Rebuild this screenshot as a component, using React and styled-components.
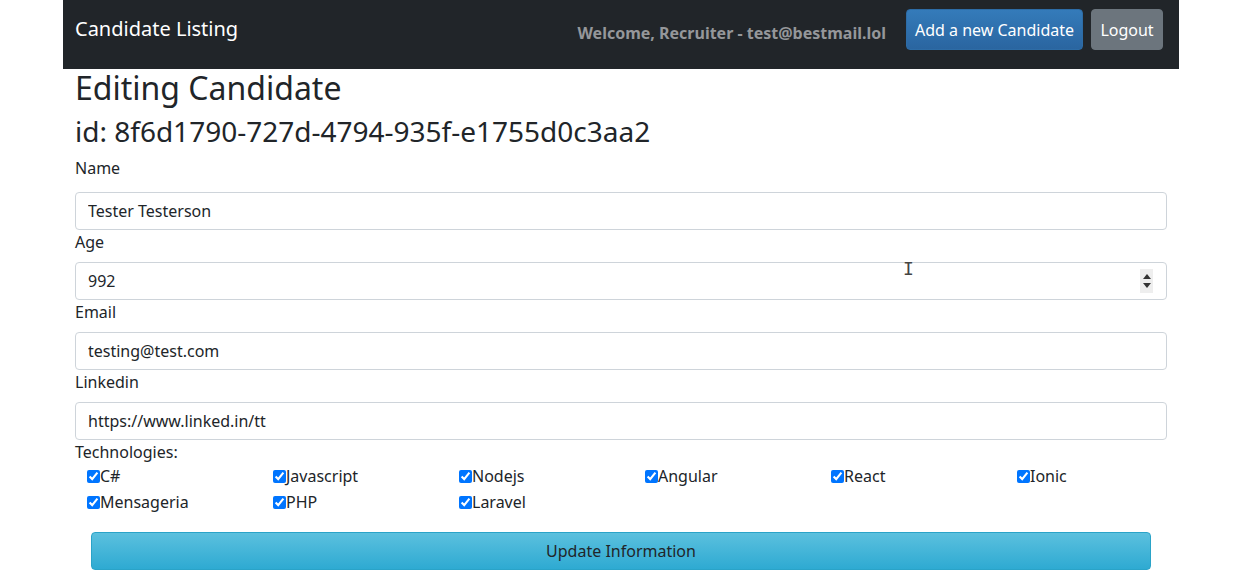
import React from "react"
import styled, { createGlobalStyle } from "styled-components"

const Global = createGlobalStyle`
  body {
    margin: 0;
    background: #fff;
    font-family: "Noto Sans", "Open Sans", sans-serif;
    color: #212529;
  }
  * { box-sizing: border-box; }
`

const Page = styled.div`
  width: 1116px;
  margin-left: 63px;
`

const Navbar = styled.nav`
  height: 69px;
  background: #212529;
  display: flex;
  flex-flow: row nowrap;
  align-items: flex-start;
  padding: 0 16px 0 12px;
`

const Brand = styled.span`
  font-size: 20px;
  line-height: 30px;
  color: #fff;
  margin-top: 14px;
  flex: 1 1 auto;
`

const Welcome = styled.span`
  font-size: 16px;
  line-height: 24px;
  font-weight: 700;
  color: #95979a;
  margin-right: 20px;
  margin-top: 21px;
`

const NavButton = styled.button`
  font-family: inherit;
  font-size: 16px;
  height: 41px;
  width: ${p => (p.$primary ? "177px" : "72px")};
  padding: 0;
  margin-top: 9px;
  border-radius: 4px;
  color: #fff;
  border: 1px solid ${p => (p.$primary ? "#2d6ca6" : "#6c757d")};
  background: ${p => (p.$primary ? "linear-gradient(to bottom, #347bba 0, #2a65a0 100%)" : "#6c757d")};
  margin-left: ${p => (p.$primary ? "0" : "8px")};
`

const Content = styled.div`
  padding: 0 12px;
`

const Title = styled.h1`
  font-size: 32px;
  font-weight: 400;
  line-height: 38px;
  margin: 0;
`

const Subtitle = styled.h3`
  font-size: 28px;
  font-weight: 400;
  line-height: 36px;
  margin: 6px 0 0;
`

const Label = styled.label`
  display: block;
  font-size: 16px;
  line-height: 24px;
  margin-bottom: ${p => (p.$first ? "12px" : "8px")};
  margin-top: ${p => (p.$first ? "7px" : "0")};
`

const Field = styled.div`
  position: relative;
`

const Input = styled.input`
  display: block;
  width: 100%;
  height: 38px;
  padding: 6px 12px;
  font-family: inherit;
  font-size: 16px;
  color: #212529;
  border: 1px solid #ced4da;
  border-radius: 4px;
  background: #fff;
  outline: none;
`

const Spinner = styled.div`
  position: absolute;
  right: 14px;
  top: 7px;
  width: 13px;
  height: 24px;
  background: #eeeeee;
  display: flex;
  flex-flow: column nowrap;
  align-items: center;
  justify-content: center;
  gap: 4px;
`

const Arrow = styled.span`
  width: 0;
  height: 0;
  border-left: 4px solid transparent;
  border-right: 4px solid transparent;
  ${p => (p.$up ? "border-bottom: 5px solid #333;" : "border-top: 5px solid #333;")}
`

const Cursor = styled.span`
  position: absolute;
  left: 828px;
  top: -4px;
  font-family: "DejaVu Sans Mono", monospace;
  font-size: 18px;
  color: #444;
  pointer-events: none;
`

const TechTitle = styled.div`
  font-size: 16px;
  line-height: 24px;
`

const TechGrid = styled.div`
  display: grid;
  grid-template-columns: repeat(6, 186px);
  padding-left: 8px;
  row-gap: 2px;
`

const Tech = styled.label`
  display: flex;
  align-items: center;
  font-size: 16px;
  line-height: 24px;
`

const Check = styled.input`
  margin: 0 0 0 4px;
  width: 13px;
  height: 13px;
`

const UpdateButton = styled.button`
  display: block;
  width: 1060px;
  height: 38px;
  margin: 18px 0 0 16px;
  font-family: inherit;
  font-size: 16px;
  color: #212529;
  border: 1px solid #2aa3c8;
  border-radius: 4px;
  background: linear-gradient(to bottom, #5bc0de 0, #2eaad2 100%);
`

const techs = ["C#", "Javascript", "Nodejs", "Angular", "React", "Ionic", "Mensageria", "PHP", "Laravel"]

export default function App() {
  return (
    <Page>
      <Global />
      <Navbar>
        <Brand>Candidate Listing</Brand>
        <Welcome>Welcome, Recruiter - test@bestmail.lol</Welcome>
        <NavButton $primary>Add a new Candidate</NavButton>
        <NavButton>Logout</NavButton>
      </Navbar>
      <Content>
        <Title>Editing Candidate</Title>
        <Subtitle>id: 8f6d1790-727d-4794-935f-e1755d0c3aa2</Subtitle>
        <Label $first>Name</Label>
        <Input defaultValue="Tester Testerson" />
        <Label>Age</Label>
        <Field>
          <Input defaultValue="992" />
          <Spinner>
            <Arrow $up />
            <Arrow />
          </Spinner>
          <Cursor>I</Cursor>
        </Field>
        <Label>Email</Label>
        <Input defaultValue="testing@test.com" />
        <Label>Linkedin</Label>
        <Input defaultValue="https://www.linked.in/tt" />
        <TechTitle>Technologies:</TechTitle>
        <TechGrid>
          {techs.map(t => (
            <Tech key={t}>
              <Check type="checkbox" defaultChecked />
              {t}
            </Tech>
          ))}
        </TechGrid>
        <UpdateButton>Update Information</UpdateButton>
      </Content>
    </Page>
  )
}
